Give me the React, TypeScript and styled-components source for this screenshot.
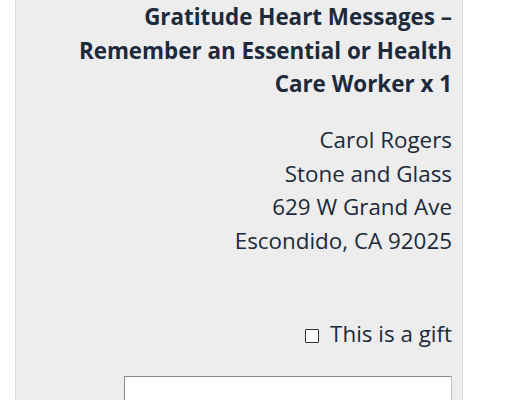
import React from 'react';
import styled, { createGlobalStyle } from 'styled-components';

const GlobalStyle = createGlobalStyle`
  html, body {
    margin: 0;
    padding: 0;
    background: #ffffff;
    font-family: 'Open Sans', 'Liberation Sans', sans-serif;
    color: #1c2a3b;
  }
`;

const Panel = styled.div`
  box-sizing: border-box;
  margin-left: 15px;
  width: 448px;
  min-height: 400px;
  background-color: #ededed;
  border-left: 1px solid #dcdcdc;
  border-right: 1px solid #dcdcdc;
  padding: 0 10px 0 40px;
  text-align: right;
  font-size: 22.4px;
  line-height: 1.5;
`;

const ItemTitle = styled.h3`
  margin: 0;
  font-size: 22.4px;
  font-weight: 700;
  line-height: 1.5;
  color: #1c2a3b;
`;

const Address = styled.address`
  margin: 22.4px 0 0;
  font-style: normal;
`;

const GiftRow = styled.label`
  display: flex;
  justify-content: flex-end;
  align-items: center;
  margin-top: 59.6px;
  cursor: pointer;
`;

const Checkbox = styled.input`
  appearance: none;
  box-sizing: border-box;
  width: 14px;
  height: 14px;
  margin: 3px 11px 0 0;
  border: 1px solid #333333;
  border-radius: 1px;
  background: #ffffff;
`;

const FieldRow = styled.div`
  display: grid;
  grid-template-columns: 1fr 328px;
  column-gap: 14px;
  margin-top: 25.2px;
  margin-left: -24px;
`;

const FieldLabel = styled.label`
  padding-top: 18px;
  font-size: 16px;
  line-height: 25.6px;
`;

const TextInput = styled.input`
  box-sizing: border-box;
  width: 328px;
  height: 40px;
  border: 1px solid #8a8a8a;
  border-right-color: #c4c4c4;
  border-bottom-color: #c4c4c4;
  background: #ffffff;
  font-family: inherit;
  font-size: 16px;
`;

function App() {
  return (
    <>
      <GlobalStyle />
      <Panel>
        <ItemTitle>
          Gratitude Heart Messages – Remember an Essential or Health Care Worker x 1
        </ItemTitle>
        <Address>
          Carol Rogers
          <br />
          Stone and Glass
          <br />
          629 W Grand Ave
          <br />
          Escondido, CA 92025
        </Address>
        <GiftRow>
          <Checkbox type="checkbox" />
          This is a gift
        </GiftRow>
        <FieldRow>
          <FieldLabel htmlFor="gift-note">Note</FieldLabel>
          <TextInput id="gift-note" type="text" />
        </FieldRow>
      </Panel>
    </>
  );
}

export default App;
